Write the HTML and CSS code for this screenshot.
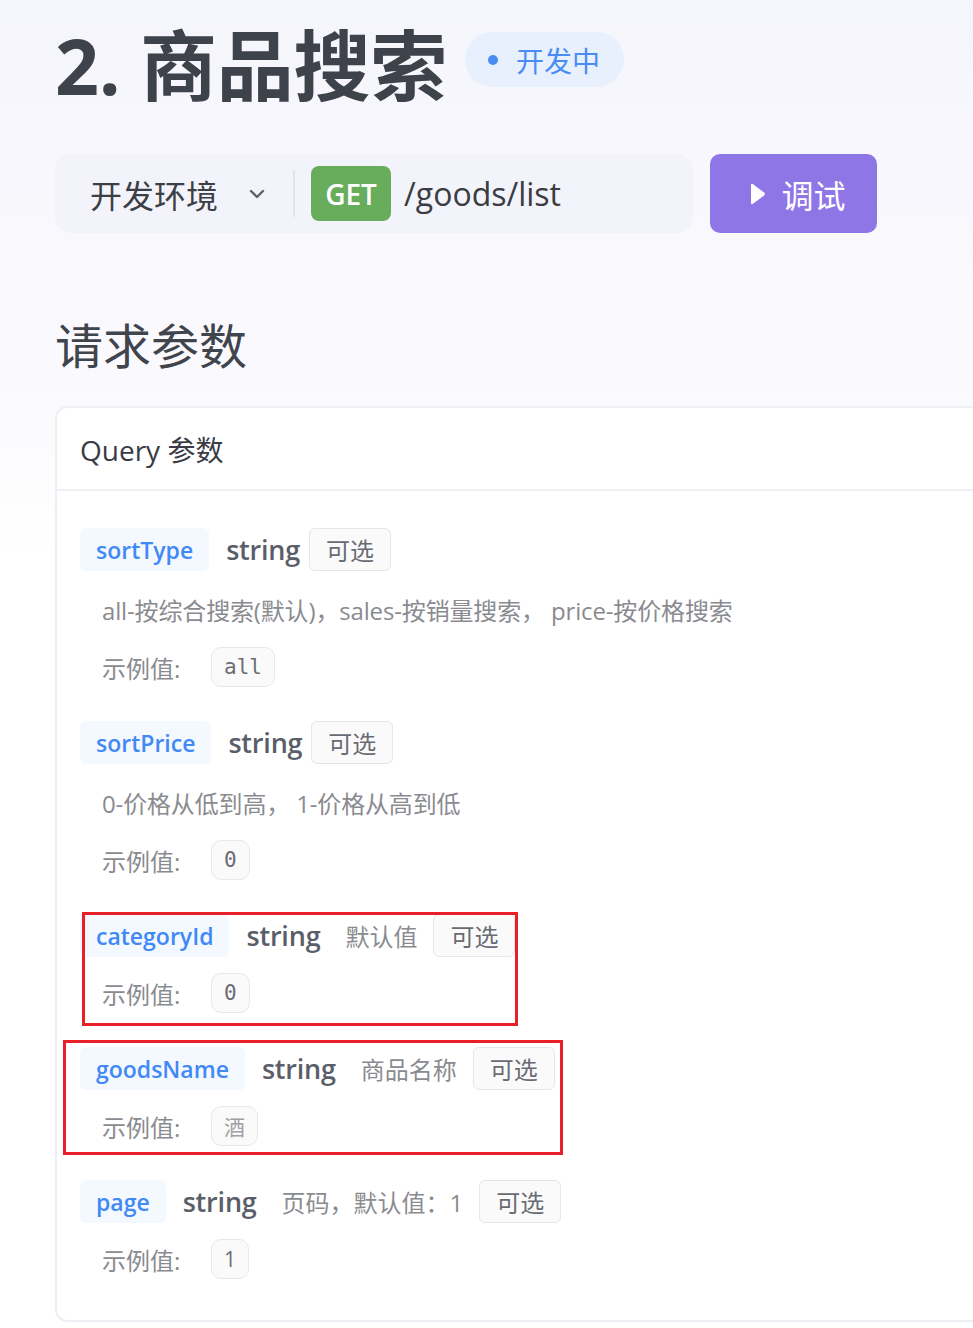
FILE: index.html
```html
<!DOCTYPE html>
<html lang="zh-CN">
<head>
<meta charset="utf-8">
<title>商品搜索</title>
<link rel="stylesheet" href="styles.css">
</head>
<body>
<div class="page">
  <div class="hero">
    <h1 class="title">2. 商品搜索</h1>
    <span class="status"><span class="dot"></span>开发中</span>
  </div>

  <div class="req-bar">
    <div class="env">
      <span class="env-name">开发环境</span>
      <svg class="chev" width="16" height="10" viewBox="0 0 16 10"><path d="M2 2 L8 8 L14 2" fill="none" stroke="#5f6168" stroke-width="2.4" stroke-linecap="round" stroke-linejoin="round"/></svg>
      <span class="divider"></span>
      <span class="method">GET</span>
      <span class="path">/goods/list</span>
    </div>
    <button class="run"><svg width="17" height="24" viewBox="0 0 17 24"><path d="M2 3.2 Q2 1 4 2.2 L15.2 10.6 Q16.6 12 15.2 13.4 L4 21.8 Q2 23 2 20.8 Z" fill="#fff"/></svg><span>调试</span></button>
  </div>

  <h2 class="section-title">请求参数</h2>

  <div class="card">
    <div class="card-head">Query 参数</div>
    <div class="card-body">
      <div class="param">
        <div class="param-head"><span class="name">sortType</span><span class="type">string</span><span class="opt">可选</span></div>
        <div class="desc">all-按综合搜索(默认)，sales-按销量搜索， price-按价格搜索</div>
        <div class="example"><span class="ex-label">示例值:</span><span class="val">all</span></div>
      </div>
      <div class="param">
        <div class="param-head"><span class="name">sortPrice</span><span class="type">string</span><span class="opt">可选</span></div>
        <div class="desc">0-价格从低到高， 1-价格从高到低</div>
        <div class="example"><span class="ex-label">示例值:</span><span class="val">0</span></div>
      </div>
      <div class="param">
        <div class="param-head"><span class="name">categoryId</span><span class="type">string</span><span class="short">默认值</span><span class="opt">可选</span></div>
        <div class="example"><span class="ex-label">示例值:</span><span class="val">0</span></div>
      </div>
      <div class="param">
        <div class="param-head"><span class="name">goodsName</span><span class="type">string</span><span class="short">商品名称</span><span class="opt">可选</span></div>
        <div class="example"><span class="ex-label">示例值:</span><span class="val val-cjk">酒</span></div>
      </div>
      <div class="param">
        <div class="param-head"><span class="name">page</span><span class="type">string</span><span class="short">页码，默认值：1</span><span class="opt">可选</span></div>
        <div class="example"><span class="ex-label">示例值:</span><span class="val val-sans">1</span></div>
      </div>
    </div>
  </div>
</div>
<div class="mark mark-1"></div>
<div class="mark mark-2"></div>
</body>
</html>
```

FILE: styles.css
```css
html, body {
  margin: 0;
  padding: 0;
}
body {
  position: relative;
  overflow-x: hidden;
  min-height: 1328px;
  font-family: "Open Sans", "Noto Sans CJK SC", sans-serif;
  background: linear-gradient(180deg, #f5f5fc 0px, #fafafe 380px, #ffffff 560px);
  color: #3d4048;
}
.page {
  padding: 20px 0 0 55px;
}
.hero {
  display: flex;
  align-items: center;
  height: 90px;
}
.title {
  margin: 0;
  font-size: 77px;
  line-height: 1;
  font-weight: 700;
  color: #3e424b;
  white-space: nowrap;
  letter-spacing: -0.3px;
}
.status {
  display: inline-flex;
  align-items: center;
  height: 55px;
  margin-left: 18px;
  margin-bottom: 11px;
  padding: 0 24px 0 23px;
  border-radius: 28px;
  background: #e8f0fd;
  color: #4a8cf3;
  font-size: 28px;
}
.dot {
  width: 10px;
  height: 10px;
  border-radius: 50%;
  background: #4a8cf3;
  margin-right: 18px;
}
.req-bar {
  display: flex;
  margin-top: 44px;
  gap: 17px;
}
.env {
  display: flex;
  align-items: center;
  width: 603px;
  height: 79px;
  padding-left: 35px;
  border-radius: 16px;
  background: #f3f3fb;
}
.env-name {
  font-size: 32px;
  color: #3d3f46;
}
.chev {
  margin-left: 31px;
}
.divider {
  width: 2px;
  height: 47px;
  margin-left: 28px;
  background: #e4e4ec;
}
.method {
  display: flex;
  align-items: center;
  justify-content: center;
  width: 80px;
  height: 55px;
  margin-left: 16px;
  border-radius: 8px;
  background: #68ad5c;
  color: #fff;
  font-size: 28px;
  font-weight: 600;
}
.path {
  margin-left: 13px;
  font-size: 32px;
  color: #3a3c42;
}
.run {
  display: flex;
  align-items: center;
  justify-content: center;
  gap: 15px;
  width: 167px;
  height: 79px;
  border: 0;
  border-radius: 10px;
  background: #8f76e6;
  color: #fff;
  font-family: inherit;
  font-size: 32px;
  padding: 0 0 0 8px;
}
.section-title {
  margin: 81px 0 0;
  font-size: 48px;
  line-height: 64px;
  font-weight: 400;
  color: #40444c;
}
.card {
  width: 960px;
  margin-top: 28px;
  border: 2px solid #eeeef5;
  border-radius: 12px;
  background: #fff;
}
.card-head {
  display: flex;
  align-items: center;
  height: 81px;
  padding-left: 23px;
  border-bottom: 2px solid #efeff5;
  font-size: 28px;
  color: #393c44;
}
.card-body {
  padding: 37px 0 41px 23px;
}
.param + .param {
  margin-top: 34px;
}
.param-head {
  display: flex;
  align-items: center;
  height: 43px;
}
.name {
  display: flex;
  align-items: center;
  height: 43px;
  padding: 0 16px;
  border-radius: 6px;
  background: #f4f8ff;
  color: #4189f5;
  font-size: 23px;
  font-weight: 600;
}
.type {
  margin-left: 17px;
  font-size: 27px;
  font-weight: 600;
  color: #5a5e69;
  letter-spacing: -0.2px;
}
.short {
  margin-left: 25px;
  margin-right: 7px;
  font-size: 24px;
  color: #8a8b90;
}
.opt {
  display: flex;
  align-items: center;
  height: 41px;
  margin-left: 9px;
  padding: 0 16px;
  border: 1px solid #e6e6ea;
  border-radius: 6px;
  background: #fafafa;
  font-size: 24px;
  color: #696b72;
}
.desc {
  margin-top: 20px;
  padding-left: 22px;
  line-height: 40px;
  font-size: 24px;
  color: #8a8b90;
  letter-spacing: -0.15px;
}
.example {
  display: flex;
  align-items: center;
  margin-top: 16px;
  padding-left: 22px;
}
.ex-label {
  width: 109px;
  font-size: 24px;
  color: #8a8b90;
}
.val {
  display: flex;
  align-items: center;
  justify-content: center;
  height: 38px;
  padding: 0 12px;
  border: 1px solid #e8e8ec;
  border-radius: 10px;
  background: #fafafa;
  font-family: "DejaVu Sans Mono", "Liberation Mono", monospace;
  font-size: 21px;
  color: #6a6d74;
}
.val-cjk {
  font-family: "Noto Sans CJK SC", sans-serif;
  color: #a0a1a6;
}
.val-sans {
  font-family: "Open Sans", sans-serif;
}
.mark {
  position: absolute;
  border: 3px solid #e8202a;
  box-sizing: border-box;
}
.mark-1 {
  left: 82px;
  top: 912px;
  width: 436px;
  height: 114px;
}
.mark-2 {
  left: 63px;
  top: 1040px;
  width: 500px;
  height: 115px;
}
```
